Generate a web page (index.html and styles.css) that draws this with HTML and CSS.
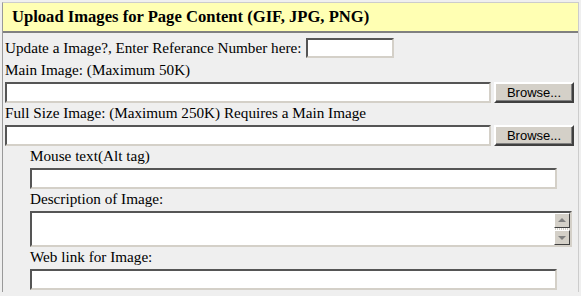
FILE: index.html
```html
<!DOCTYPE html>
<html lang="en">
<head>
    <meta charset="UTF-8">
    <title>Upload Images</title>
    <link rel="stylesheet" href="styles.css">
</head>
<body>
    <div class="panel">
        <div class="head">Upload Images for Page Content (GIF, JPG, PNG)</div>
        <div class="body">
            <div class="ref-row">
                <span>Update a Image?, Enter Referance Number here:</span>
                <input type="text" class="field ref">
            </div>
            <div class="label">Main Image: (Maximum 50K)</div>
            <div class="file-row">
                <input type="text" class="field path">
                <button type="button" class="browse">Browse...</button>
            </div>
            <div class="label">Full Size Image: (Maximum 250K) Requires a Main Image</div>
            <div class="file-row">
                <input type="text" class="field path">
                <button type="button" class="browse">Browse...</button>
            </div>

            <div class="sub">
                <div class="label">Mouse text(Alt tag)</div>
                <input type="text" class="field wide">
                <div class="label">Description of Image:</div>
                <div class="area">
                    <textarea class="area-text"></textarea>
                    <div class="scrollbar">
                        <div class="arrow up"></div>
                        <div class="track"></div>
                        <div class="arrow down"></div>
                    </div>
                </div>
                <div class="label">Web link for Image:</div>
                <input type="text" class="field wide">
            </div>
        </div>
    </div>
</body>
</html>
```

FILE: styles.css
```css
body {
    margin: 0;
    padding: 2px 2px 0 2px;
    background-color: #efefef;
    font-family: 'Liberation Serif', 'Times New Roman', serif;
    font-size: 15.2px;
    color: #000;
}
.panel {
    border-left: 1px solid #999;
    border-top: 1px solid #ccc;
    border-right: 1px solid #ccc;
    height: 290px;
    box-sizing: border-box;
}
.head {
    background-color: #ffffb3;
    border-bottom: 2px solid #808080;
    height: 28px;
    line-height: 28px;
    padding-left: 9px;
    font-size: 16.6px;
    font-weight: bold;
}
.body {
    padding: 3px 4px 0 2px;
}
.ref-row {
    display: flex;
    align-items: flex-end;
    gap: 5px;
    height: 24px;
}
.ref-row span {
    padding-bottom: 3px;
}
.field {
    box-sizing: border-box;
    height: 20px;
    margin: 2px 0 0 0;
    padding: 0 2px;
    background: #fff;
    border: 2px solid;
    border-color: #555 #d4d0c8 #d4d0c8 #555;
    font: 13px 'Liberation Sans', sans-serif;
    outline: none;
}
.ref {
    width: 88px;
    margin-bottom: 2px;
}
.label {
    height: 20px;
    line-height: 20px;
}
.file-row {
    display: flex;
    gap: 3px;
    margin-top: 2px;
    height: 21px;
}
.file-row .path {
    flex: 1;
    height: 21px;
    margin: 0;
}
.browse {
    width: 80px;
    height: 21px;
    padding: 0;
    background-color: #d4d0c8;
    border: 2px solid;
    border-color: #fff #404040 #404040 #fff;
    box-shadow: inset -1px -1px 0 #808080;
    font: 13px 'Liberation Sans', sans-serif;
    color: #000;
}
.sub {
    padding-left: 25px;
}
.wide {
    display: block;
    width: 527px;
    height: 21px;
}
.area {
    display: flex;
    box-sizing: border-box;
    width: 542px;
    height: 36px;
    margin-top: 2px;
    background: #fff;
    border: 2px solid;
    border-color: #555 #d4d0c8 #d4d0c8 #555;
}
.area-text {
    flex: 1;
    border: none;
    resize: none;
    outline: none;
    padding: 0;
}
.scrollbar {
    width: 16px;
    display: flex;
    flex-direction: column;
}
.arrow {
    box-sizing: border-box;
    height: 15px;
    background-color: #d4d0c8;
    border: 1px solid;
    border-color: #fff #404040 #404040 #fff;
    position: relative;
}
.track {
    flex: 1;
    background: repeating-linear-gradient(90deg, #fff 0 1px, #d4d0c8 1px 2px);
}
.arrow::after {
    content: "";
    position: absolute;
    left: 3px;
    border-left: 4px solid transparent;
    border-right: 4px solid transparent;
}
.up::after {
    top: 4px;
    border-bottom: 4px solid #808080;
}
.down::after {
    top: 5px;
    border-top: 4px solid #808080;
}
```
